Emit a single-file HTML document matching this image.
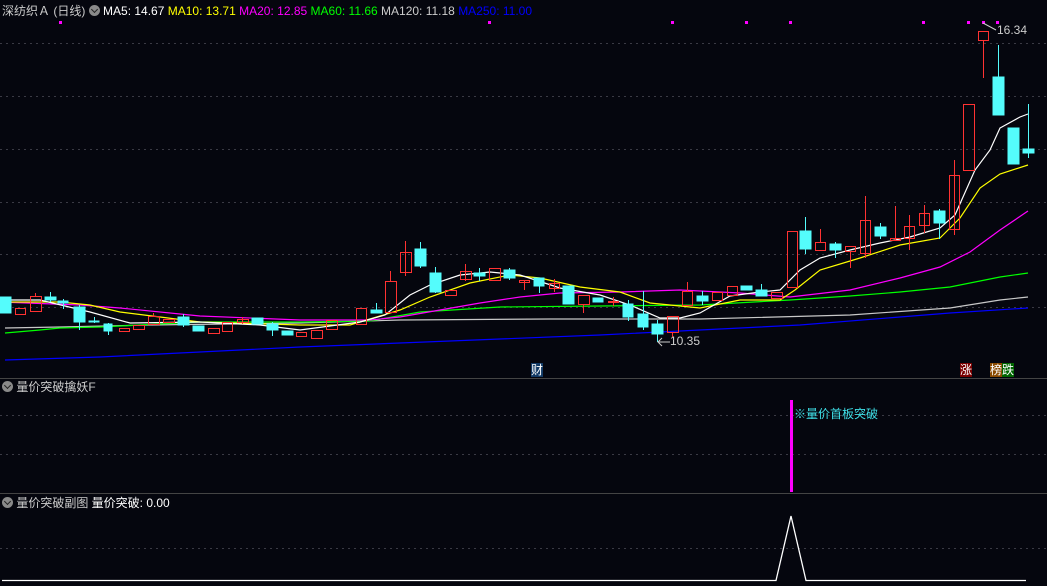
<!DOCTYPE html>
<html><head><meta charset="utf-8"><style>
html,body{margin:0;padding:0;background:#05060e;width:1047px;height:586px;overflow:hidden;font-family:"Liberation Sans","Noto Sans CJK SC",sans-serif;}
.t{position:absolute;font-size:12px;white-space:nowrap;line-height:14px}
.ic{display:inline-block;width:11px;height:11px;border-radius:50%;background:#8a8a8a;vertical-align:-1px;position:relative}
.ic:after{content:"";position:absolute;left:3px;top:2px;width:4px;height:4px;border-right:1.5px solid #222;border-bottom:1.5px solid #222;transform:rotate(45deg)}
</style></head><body>
<svg width="1047" height="586" style="position:absolute;left:0;top:0">
<g stroke="#3a3a44" stroke-dasharray="2,4" stroke-width="1">
<line x1="0" y1="43.5" x2="1047" y2="43.5"/><line x1="0" y1="96.5" x2="1047" y2="96.5"/><line x1="0" y1="149.5" x2="1047" y2="149.5"/><line x1="0" y1="202.5" x2="1047" y2="202.5"/><line x1="0" y1="254.5" x2="1047" y2="254.5"/><line x1="0" y1="307.5" x2="1047" y2="307.5"/>
<line x1="0" y1="415.5" x2="1047" y2="415.5"/><line x1="0" y1="454.5" x2="1047" y2="454.5"/><line x1="0" y1="548.5" x2="1047" y2="548.5"/>
</g>
<line x1="0" y1="378.5" x2="1047" y2="378.5" stroke="#444" />
<line x1="0" y1="493.5" x2="1047" y2="493.5" stroke="#444" />
<g fill="#ff00ff"><rect x="59" y="21" width="3" height="3"/><rect x="488" y="21" width="3" height="3"/><rect x="671" y="21" width="3" height="3"/><rect x="745" y="21" width="3" height="3"/><rect x="789" y="21" width="3" height="3"/><rect x="922" y="21" width="3" height="3"/><rect x="967" y="21" width="3" height="3"/><rect x="982" y="21" width="3" height="3"/><rect x="996" y="21" width="3" height="3"/></g>
<g fill="none" stroke-width="1.2">
<polyline stroke="#0000ff" points="5,360 100,357 200,352 300,347 400,343 500,339 600,335 700,330 800,325 900,317 950,313 1028,308"/>
<polyline stroke="#c8c8c8" points="5,328 60,327 150,325 300,323 400,320 550,319 700,319 850,315 950,308 1000,300 1028,297"/>
<polyline stroke="#00ff00" points="5,333 40,330 60,328 100,327 200,322 300,322 370,321 420,312 500,307 600,306 700,305 790,300 850,296 900,292 950,287 1000,277 1028,273"/>
<polyline stroke="#ff00ff" points="0,302 80,305 120,308 200,316 300,320 370,320 400,317 440,310 480,303 520,297 560,293 620,292 680,290 740,293 790,297 850,290 900,278 940,267 970,252 1000,230 1028,211"/>
<polyline stroke="#ffff00" points="0,302 60,302 90,305 120,312 200,322 300,325 350,325 380,316 400,310 430,297 470,283 510,275 540,278 580,287 620,292 650,303 700,308 740,300 780,300 795,290 820,270 860,258 900,245 940,238 960,218 980,188 1000,174 1028,165"/>
<polyline stroke="#ffffff" points="0,300 40,300 90,312 130,323 200,322 260,325 300,330 330,326 360,322 385,315 410,295 430,285 460,275 490,272 520,275 560,288 600,295 630,305 660,318 680,318 700,313 730,296 760,292 780,290 800,270 820,258 850,250 880,243 910,237 940,228 955,215 975,170 990,150 1000,128 1020,117 1028,114"/>
</g>
<g stroke="#54fcfc" fill="#54fcfc" stroke-width="1">
<rect x="0" y="297" width="11" height="16"/>
<line x1="50.5" y1="292" x2="50.5" y2="302"/><rect x="45" y="297" width="11" height="3"/>
<line x1="63.5" y1="299" x2="63.5" y2="309"/><rect x="58" y="301" width="10" height="2"/>
<line x1="79.5" y1="305" x2="79.5" y2="330"/><rect x="74" y="307" width="11" height="15"/>
<line x1="94.5" y1="317" x2="94.5" y2="323"/><rect x="89" y="321" width="10" height="1"/>
<line x1="108.5" y1="323" x2="108.5" y2="335"/><rect x="104" y="324" width="8" height="7"/>
<line x1="183.5" y1="314" x2="183.5" y2="327"/><rect x="178" y="317" width="11" height="8"/>
<rect x="193" y="326" width="11" height="5"/>
<rect x="252" y="318" width="11" height="6"/>
<line x1="272.5" y1="322" x2="272.5" y2="336"/><rect x="267" y="324" width="11" height="6"/>
<rect x="282" y="331" width="11" height="4"/>
<line x1="376.5" y1="303" x2="376.5" y2="313"/><rect x="371" y="310" width="11" height="3"/>
<line x1="420.5" y1="242" x2="420.5" y2="268"/><rect x="415" y="249" width="11" height="17"/>
<line x1="435.5" y1="267" x2="435.5" y2="293"/><rect x="430" y="273" width="11" height="19"/>
<line x1="479.5" y1="268" x2="479.5" y2="281"/><rect x="474" y="273" width="11" height="3"/>
<line x1="509.5" y1="268" x2="509.5" y2="280"/><rect x="504" y="270" width="11" height="8"/>
<line x1="539.5" y1="278" x2="539.5" y2="293"/><rect x="534" y="278" width="10" height="8"/>
<rect x="563" y="286" width="11" height="18"/>
<rect x="593" y="298" width="10" height="4"/>
<line x1="628.5" y1="300" x2="628.5" y2="321"/><rect x="623" y="304" width="10" height="13"/>
<line x1="643.5" y1="291" x2="643.5" y2="330"/><rect x="638" y="314" width="10" height="13"/>
<line x1="657.5" y1="320" x2="657.5" y2="342"/><rect x="652" y="324" width="11" height="10"/>
<line x1="702.5" y1="291" x2="702.5" y2="305"/><rect x="697" y="296" width="11" height="5"/>
<rect x="741" y="286" width="11" height="4"/>
<line x1="761.5" y1="284" x2="761.5" y2="296"/><rect x="756" y="290" width="11" height="6"/>
<line x1="805.5" y1="217" x2="805.5" y2="254"/><rect x="800" y="231" width="11" height="18"/>
<line x1="835.5" y1="242" x2="835.5" y2="258"/><rect x="830" y="244" width="11" height="6"/>
<line x1="880.5" y1="223" x2="880.5" y2="239"/><rect x="875" y="227" width="11" height="9"/>
<line x1="939.5" y1="209" x2="939.5" y2="239"/><rect x="934" y="211" width="11" height="12"/>
<line x1="998.5" y1="45" x2="998.5" y2="115"/><rect x="993" y="77" width="11" height="38"/>
<rect x="1008" y="128" width="11" height="36"/>
<line x1="1028.5" y1="104" x2="1028.5" y2="158"/><rect x="1023" y="149" width="11" height="4"/>
</g>
<g stroke="#ff3232" fill="none" stroke-width="1">
<rect x="15.5" y="308.5" width="10" height="6"/>
<line x1="35.5" y1="293" x2="35.5" y2="296"/><rect x="30.5" y="296.5" width="11" height="15"/>
<rect x="119.5" y="328.5" width="10" height="3"/>
<rect x="133.5" y="325.5" width="11" height="4"/>
<line x1="153.5" y1="313" x2="153.5" y2="316"/><rect x="148.5" y="316.5" width="11" height="8"/>
<rect x="163.5" y="319.5" width="11" height="3"/>
<rect x="208.5" y="328.5" width="11" height="5"/>
<rect x="222.5" y="322.5" width="10" height="9"/>
<line x1="242.5" y1="317" x2="242.5" y2="324"/><rect x="237.5" y="319.5" width="11" height="3"/>
<rect x="296.5" y="332.5" width="10" height="4"/>
<rect x="311.5" y="330.5" width="11" height="8"/>
<rect x="326.5" y="320.5" width="11" height="9"/>
<rect x="356.5" y="308.5" width="10" height="16"/>
<line x1="390.5" y1="271" x2="390.5" y2="281"/><rect x="385.5" y="281.5" width="11" height="31"/>
<line x1="405.5" y1="241" x2="405.5" y2="276"/><rect x="400.5" y="252.5" width="11" height="20"/>
<rect x="445.5" y="290.5" width="11" height="5"/>
<line x1="465.5" y1="264" x2="465.5" y2="281"/><rect x="460.5" y="271.5" width="11" height="8"/>
<rect x="489.5" y="268.5" width="11" height="12"/>
<line x1="524.5" y1="280" x2="524.5" y2="290"/><rect x="519.5" y="280.5" width="10" height="2"/>
<line x1="554.5" y1="279" x2="554.5" y2="292"/><rect x="549.5" y="283.5" width="10" height="5"/>
<line x1="583.5" y1="304" x2="583.5" y2="313"/><rect x="578.5" y="295.5" width="11" height="9"/>
<line x1="613.5" y1="297" x2="613.5" y2="306"/><rect x="608.5" y="301.5" width="10" height="1"/>
<line x1="672.5" y1="332" x2="672.5" y2="337"/><rect x="667.5" y="316.5" width="11" height="16"/>
<line x1="687.5" y1="282" x2="687.5" y2="291"/><rect x="682.5" y="291.5" width="10" height="14"/>
<rect x="712.5" y="292.5" width="10" height="8"/>
<rect x="727.5" y="286.5" width="10" height="9"/>
<rect x="771.5" y="292.5" width="11" height="6"/>
<rect x="787.5" y="231.5" width="10" height="56"/>
<line x1="820.5" y1="229" x2="820.5" y2="242"/><rect x="815.5" y="242.5" width="10" height="8"/>
<line x1="850.5" y1="251" x2="850.5" y2="268"/><rect x="845.5" y="246.5" width="10" height="5"/>
<line x1="865.5" y1="196" x2="865.5" y2="258"/><rect x="860.5" y="220.5" width="10" height="33"/>
<line x1="895.5" y1="206" x2="895.5" y2="241"/><rect x="890.5" y="238.5" width="10" height="2"/>
<line x1="909.5" y1="215" x2="909.5" y2="250"/><rect x="904.5" y="226.5" width="10" height="12"/>
<line x1="924.5" y1="205" x2="924.5" y2="233"/><rect x="919.5" y="213.5" width="10" height="12"/>
<line x1="954.5" y1="160" x2="954.5" y2="235"/><rect x="949.5" y="175.5" width="10" height="54"/>
<rect x="963.5" y="104.5" width="11" height="66"/>
<line x1="983.5" y1="40" x2="983.5" y2="78"/><rect x="978.5" y="31.5" width="10" height="9"/>
</g>
<polyline points="658,342 662,338 658,342 662,346" stroke="#ccc" fill="none"/><line x1="658" y1="342" x2="670" y2="342" stroke="#ccc"/>
<polyline points="983,23 996,30" stroke="#ccc" fill="none"/>
<rect x="790" y="400" width="3" height="92" fill="#ff00ff"/>
<polyline points="2,580.5 776,580.5 791,516 806,580.5 1026,580.5" fill="none" stroke="#fff" stroke-width="1.3"/>
<rect x="531" y="363" width="12" height="14" fill="#123a66"/>
<rect x="960" y="363" width="12" height="14" fill="#7a0000"/>
<rect x="990" y="363" width="12" height="14" fill="#8a4a00"/>
<rect x="1002" y="363" width="12" height="14" fill="#006600"/>
</svg>
<div class="t" style="left:2px;top:4px;color:#ccc">深纺织Ａ (日线) <span class="ic"></span> <span style="color:#fff">MA5: 14.67</span> <span style="color:#ff0">MA10: 13.71</span> <span style="color:#f0f">MA20: 12.85</span> <span style="color:#0f0">MA60: 11.66</span> <span style="color:#ccc">MA120: 11.18</span> <span style="color:#00f">MA250: 11.00</span></div>
<div class="t" style="left:997px;top:23px;color:#ccc">16.34</div>
<div class="t" style="left:670px;top:334px;color:#ccc">10.35</div>
<div class="t" style="left:531px;top:363px;color:#fff">财</div>
<div class="t" style="left:960px;top:363px;color:#fff">涨</div>
<div class="t" style="left:990px;top:363px;color:#fff">榜跌</div>
<div class="t" style="left:2px;top:380px;color:#ccc"><span class="ic"></span> 量价突破擒妖F</div>
<div class="t" style="left:794px;top:407px;color:#3fe0e8">※量价首板突破</div>
<div class="t" style="left:2px;top:496px;color:#ccc"><span class="ic"></span> 量价突破副图 <span style="color:#fff">量价突破: 0.00</span></div>
</body></html>
